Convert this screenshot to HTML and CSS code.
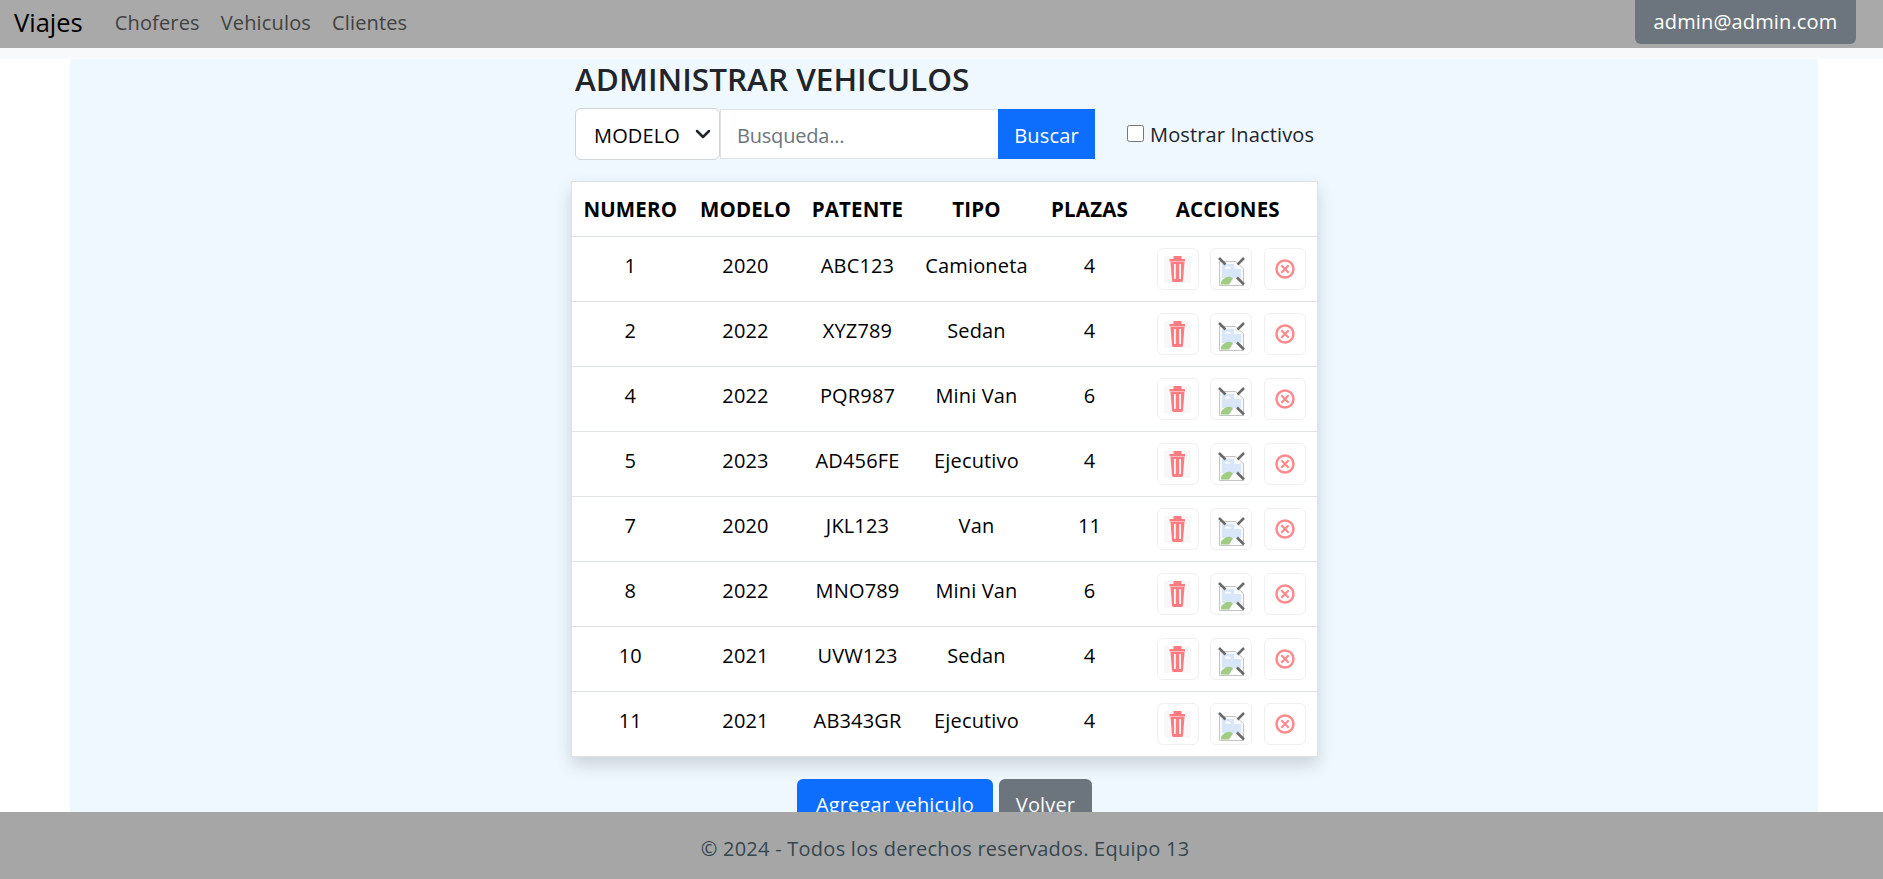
FILE: index.html
```html
<!DOCTYPE html>
<html lang="es">
<head>
  <meta charset="UTF-8">
  <title>Administrar Vehiculos</title>
  <link rel="stylesheet" href="styles.css">
</head>
<body>
  <svg class="icon-defs" width="0" height="0">
    <symbol id="icon-trash" viewBox="0 0 27 27">
      <rect width="27" height="27" fill="#f8f8f8"/>
      <path d="M9.500 0h8v3h3.500v2.500H5.500V3h4z" fill="#ff7b80"/>
      <path fill-rule="evenodd" d="M6.500 6L8 24.500Q8.200 26 10 26H17Q18.800 26 19 24.500L20.500 6zM10 8h1.800v15H10zM15.200 8H17v15h-1.800z" fill="#ff7b80"/>
    </symbol>
    <symbol id="icon-broken" viewBox="0 0 27 30">
      <path d="M1.500 4.500h16l8 7v17h-24z" fill="#f8f9f9" stroke="#c4c4c4"/>
      <path d="M4 7h12v5h7v9H4z" fill="#d8e6f9"/>
      <path d="M7 11c1-2 3-2 4-1 1 0 2 0 2 1.500H7z" fill="#fff"/>
      <path d="M3 27.500v-3c4-5 9-6 12-3l-4 6z" fill="#a0cc84"/>
      <path d="M12 27.500l5-5 7 5z" fill="#fff"/>
      <path d="M1 1l6.500 6.500M26 1l-6.500 6.500M19 20.500l7 7" stroke="#6a6a6a" stroke-width="2.500"/>
    </symbol>
    <symbol id="icon-cancel" viewBox="0 0 20 20">
      <circle cx="10" cy="10" r="8.500" fill="none" stroke="#ff8a8e" stroke-width="2.500"/>
      <path d="M6.300 6.300l7.400 7.400M13.700 6.300l-7.400 7.400" stroke="#ff8a8e" stroke-width="2.200"/>
    </symbol>
  </svg>

  <nav class="navbar">
    <a class="brand" href="#">Viajes</a>
    <div class="nav-links">
      <a href="#">Choferes</a>
      <a href="#">Vehiculos</a>
      <a href="#">Clientes</a>
    </div>
    <button class="user-btn">admin@admin.com</button>
  </nav>

  <div class="strip"></div>

  <main class="content">
    <div class="column">
      <h2>ADMINISTRAR VEHICULOS</h2>

      <form class="filters">
        <select class="filter-select">
          <option>MODELO</option>
        </select>
        <input class="filter-input" type="text" placeholder="Busqueda...">
        <button class="btn btn-primary btn-search" type="button">Buscar</button>
        <label class="inactive"><input type="checkbox"> Mostrar Inactivos</label>
      </form>

      <table class="vehicles">
        <thead>
          <tr>
            <th class="c-num">NUMERO</th>
            <th class="c-model">MODELO</th>
            <th class="c-plate">PATENTE</th>
            <th class="c-type">TIPO</th>
            <th class="c-seats">PLAZAS</th>
            <th class="c-actions">ACCIONES</th>
          </tr>
        </thead>
        <tbody>
          <tr>
            <td>1</td><td>2020</td><td>ABC123</td><td>Camioneta</td><td>4</td>
            <td class="actions"><div class="action-btns">
              <button class="act act-trash"><svg><use href="#icon-trash"/></svg></button>
              <button class="act act-broken"><svg><use href="#icon-broken"/></svg></button>
              <button class="act act-cancel"><svg><use href="#icon-cancel"/></svg></button>
            </div></td>
          </tr>
          <tr>
            <td>2</td><td>2022</td><td>XYZ789</td><td>Sedan</td><td>4</td>
            <td class="actions"><div class="action-btns">
              <button class="act act-trash"><svg><use href="#icon-trash"/></svg></button>
              <button class="act act-broken"><svg><use href="#icon-broken"/></svg></button>
              <button class="act act-cancel"><svg><use href="#icon-cancel"/></svg></button>
            </div></td>
          </tr>
          <tr>
            <td>4</td><td>2022</td><td>PQR987</td><td>Mini Van</td><td>6</td>
            <td class="actions"><div class="action-btns">
              <button class="act act-trash"><svg><use href="#icon-trash"/></svg></button>
              <button class="act act-broken"><svg><use href="#icon-broken"/></svg></button>
              <button class="act act-cancel"><svg><use href="#icon-cancel"/></svg></button>
            </div></td>
          </tr>
          <tr>
            <td>5</td><td>2023</td><td>AD456FE</td><td>Ejecutivo</td><td>4</td>
            <td class="actions"><div class="action-btns">
              <button class="act act-trash"><svg><use href="#icon-trash"/></svg></button>
              <button class="act act-broken"><svg><use href="#icon-broken"/></svg></button>
              <button class="act act-cancel"><svg><use href="#icon-cancel"/></svg></button>
            </div></td>
          </tr>
          <tr>
            <td>7</td><td>2020</td><td>JKL123</td><td>Van</td><td>11</td>
            <td class="actions"><div class="action-btns">
              <button class="act act-trash"><svg><use href="#icon-trash"/></svg></button>
              <button class="act act-broken"><svg><use href="#icon-broken"/></svg></button>
              <button class="act act-cancel"><svg><use href="#icon-cancel"/></svg></button>
            </div></td>
          </tr>
          <tr>
            <td>8</td><td>2022</td><td>MNO789</td><td>Mini Van</td><td>6</td>
            <td class="actions"><div class="action-btns">
              <button class="act act-trash"><svg><use href="#icon-trash"/></svg></button>
              <button class="act act-broken"><svg><use href="#icon-broken"/></svg></button>
              <button class="act act-cancel"><svg><use href="#icon-cancel"/></svg></button>
            </div></td>
          </tr>
          <tr>
            <td>10</td><td>2021</td><td>UVW123</td><td>Sedan</td><td>4</td>
            <td class="actions"><div class="action-btns">
              <button class="act act-trash"><svg><use href="#icon-trash"/></svg></button>
              <button class="act act-broken"><svg><use href="#icon-broken"/></svg></button>
              <button class="act act-cancel"><svg><use href="#icon-cancel"/></svg></button>
            </div></td>
          </tr>
          <tr>
            <td>11</td><td>2021</td><td>AB343GR</td><td>Ejecutivo</td><td>4</td>
            <td class="actions"><div class="action-btns">
              <button class="act act-trash"><svg><use href="#icon-trash"/></svg></button>
              <button class="act act-broken"><svg><use href="#icon-broken"/></svg></button>
              <button class="act act-cancel"><svg><use href="#icon-cancel"/></svg></button>
            </div></td>
          </tr>
        </tbody>
      </table>

      <div class="bottom-actions">
        <button class="btn btn-primary">Agregar vehiculo</button>
        <button class="btn btn-secondary">Volver</button>
      </div>
    </div>
  </main>

  <footer class="footer">© 2024 - Todos los derechos reservados. Equipo 13</footer>
</body>
</html>
```

FILE: styles.css
```css
* {
  box-sizing: border-box;
}
html, body {
  height: 100%;
}
body {
  margin: 0;
  font-family: "Open Sans", "Noto Sans", sans-serif;
  font-size: 20px;
  letter-spacing: 0.15px;
  color: #000;
  background: #fff;
  overflow: hidden;
}
.icon-defs {
  position: absolute;
}

/* navbar */
.navbar {
  height: 48px;
  background: #a9a9a9;
  display: flex;
  align-items: center;
  padding: 0 27px 4px 14px;
}
.navbar a {
  text-decoration: none;
}
.brand {
  font-size: 25.500px;
  letter-spacing: 0;
  color: #000;
  margin-right: 32px;
}
.nav-links {
  display: flex;
  gap: 21px;
}
.nav-links a {
  color: #424242;
}
.user-btn {
  margin-left: auto;
  width: 221px;
  height: 54px;
  margin-top: -10px;
  padding-top: 9px;
  border: 0;
  border-radius: 6px;
  background: #6c757d;
  color: #fff;
  font: inherit;
  letter-spacing: inherit;
}
.strip {
  height: 11px;
  background: #f8f9fa;
}

/* page */
.content {
  width: 1748px;
  height: 820px;
  margin-left: 70px;
  background: #eff7ff;
}
.column {
  width: 746px;
  margin: 0 auto;
}
h2 {
  margin: 0;
  padding: 0 0 1px 4px;
  font-size: 31.500px;
  font-weight: 600;
  line-height: 39px;
  color: #212529;
  letter-spacing: 0;
}

/* filters */
.filters {
  display: flex;
  align-items: center;
  height: 52px;
  margin: 9px 0 21px 4px;
}
.filter-select {
  appearance: none;
  width: 145px;
  height: 52px;
  padding: 2px 0 0 18px;
  border: 1px solid #ced4da;
  border-radius: 6px;
  background: #fff url("data:image/svg+xml,%3csvg xmlns='http://www.w3.org/2000/svg' viewBox='0 0 16 16'%3e%3cpath fill='none' stroke='%23212529' stroke-linecap='round' stroke-linejoin='round' stroke-width='2.5' d='m2 5 6 6 6-6'/%3e%3c/svg%3e") no-repeat right 8px center / 16px 16px;
  color: #000;
  font: inherit;
  letter-spacing: inherit;
}
.filter-input {
  width: 278px;
  height: 50px;
  padding: 2px 16px 0;
  border: 1px solid #dee2e6;
  border-right: 0;
  font: inherit;
  letter-spacing: -0.2px;
  background: #fff;
}
.filter-input::placeholder {
  color: #6c757d;
}
.btn {
  border: 0;
  border-radius: 6px;
  font: inherit;
  letter-spacing: inherit;
  color: #fff;
}
.btn-primary {
  background: #0d6efd;
}
.btn-secondary {
  background: #6c757d;
}
.btn-search {
  width: 97px;
  height: 50px;
  padding-top: 3px;
  border-radius: 0;
}
.inactive {
  display: flex;
  align-items: center;
  gap: 6px;
  margin-left: 32px;
  padding-top: 1px;
  color: #212529;
}
.inactive input {
  width: 17px;
  height: 17px;
  margin: 0 0 2px;
}

/* table */
.vehicles {
  width: 746px;
  height: 576px;
  table-layout: fixed;
  border-collapse: collapse;
  background: #fff;
  border: 1px solid #dee2e6;
  box-shadow: 0 8px 16px rgba(0, 0, 0, .15);
}
.vehicles th {
  height: 55px;
  font-size: 20.500px;
  font-weight: 700;
  text-align: center;
  padding: 0;
  border-bottom: 1px solid #dee2e6;
}
.vehicles td {
  height: 65px;
  text-align: center;
  padding: 0 0 8px;
  border-bottom: 1px solid #dee2e6;
}
.vehicles tr:last-child td {
  border-bottom: 0;
}
.c-num { width: 117px; }
.c-model { width: 114px; }
.c-plate { width: 110px; }
.c-type { width: 128px; }
.c-seats { width: 98px; }
.c-actions { width: 179px; }

.vehicles td.actions {
  padding: 0 0 0 7px;
}
.action-btns {
  display: flex;
  align-items: center;
  justify-content: center;
  gap: 11.500px;
}
.act {
  width: 42px;
  height: 42px;
  padding: 0;
  display: flex;
  align-items: center;
  justify-content: center;
  background: #fff;
  border: 1px solid #eff0f1;
  border-radius: 6px;
}
.act-trash svg { width: 27px; height: 27px; }
.act-broken svg { width: 27px; height: 30px; margin-top: 6px; }
.act-cancel svg { width: 20px; height: 20px; }

.bottom-actions {
  display: flex;
  justify-content: center;
  gap: 6px;
  margin-top: 22px;
  padding-left: 1px;
}
.bottom-actions .btn {
  height: 48px;
  padding-top: 3px;
}
.bottom-actions .btn-primary { width: 196px; }
.bottom-actions .btn-secondary { width: 93px; }

/* footer */
.footer {
  position: fixed;
  left: 0;
  right: 0;
  bottom: 0;
  height: 67px;
  padding: 6px 0 0 7px;
  display: flex;
  align-items: center;
  justify-content: center;
  background: #a6a6a6;
  color: #37474f;
  letter-spacing: 0.25px;
}
```
